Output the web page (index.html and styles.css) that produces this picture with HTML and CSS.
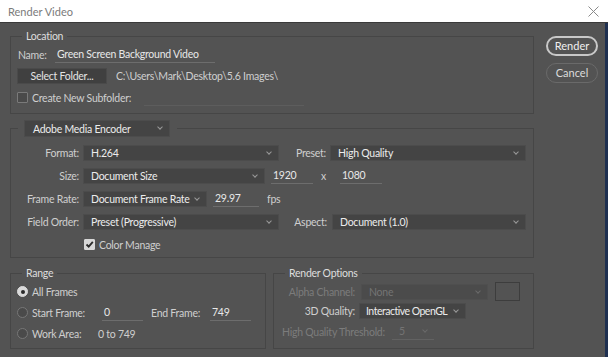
FILE: index.html
```html
<!DOCTYPE html>
<html lang="en">
<head>
    <meta charset="UTF-8">
    <meta name="viewport" content="width=device-width, initial-scale=1.0">
    <title>Render Video</title>
    <link rel="stylesheet" href="styles.css">
</head>
<body>
    <div class="titlebar">
        <span class="title">Render Video</span>
        <svg class="close" width="11" height="11" viewBox="0 0 11 11"><path d="M0.5 0.5L10.5 10.5M10.5 0.5L0.5 10.5" stroke="#8a8a8a" stroke-width="1"/></svg>
    </div>

    <div class="dialog">
        <div class="panels">
            <fieldset class="box location">
                <legend>Location</legend>
                <div class="row">
                    <span class="label name-label">Name:</span>
                    <span class="field name-field">Green Screen Background Video</span>
                </div>
                <div class="row">
                    <span class="btn">Select Folder...</span>
                    <span class="path">C:\Users\Mark\Desktop\5.6 Images\</span>
                </div>
                <div class="row">
                    <span class="check"></span>
                    <span class="label check-label sub-label">Create New Subfolder:</span>
                    <span class="field sub-field"></span>
                </div>
            </fieldset>

            <fieldset class="box encoder">
                <legend><span class="select encoder-select">Adobe Media Encoder<i class="chev"></i></span></legend>
                <div class="row">
                    <span class="label col">Format:</span>
                    <span class="select w195">H.264<i class="chev"></i></span>
                    <span class="label preset-label">Preset:</span>
                    <span class="select w196">High Quality<i class="chev"></i></span>
                </div>
                <div class="row">
                    <span class="label col">Size:</span>
                    <span class="select w181">Document Size<i class="chev"></i></span>
                    <span class="field num">1920</span>
                    <span class="label times">x</span>
                    <span class="field num">1080</span>
                </div>
                <div class="row">
                    <span class="label col">Frame Rate:</span>
                    <span class="select w123">Document Frame Rate<i class="chev"></i></span>
                    <span class="field fps-field">29.97</span>
                    <span class="label fps">fps</span>
                </div>
                <div class="row">
                    <span class="label col">Field Order:</span>
                    <span class="select w195">Preset (Progressive)<i class="chev"></i></span>
                    <span class="label aspect-label">Aspect:</span>
                    <span class="select w194">Document (1.0)<i class="chev"></i></span>
                </div>
                <div class="row color-row">
                    <span class="check checked">
                        <svg width="9" height="9" viewBox="0 0 9 9"><path d="M1.5 4.5L3.7 6.7L7.8 1.8" fill="none" stroke="#2b2b2b" stroke-width="1.8"/></svg>
                    </span>
                    <span class="label check-label">Color Manage</span>
                </div>
            </fieldset>

            <div class="bottom">
                <fieldset class="box range">
                    <legend>Range</legend>
                    <div class="row">
                        <span class="radio on"></span>
                        <span class="label radio-label">All Frames</span>
                    </div>
                    <div class="row">
                        <span class="radio"></span>
                        <span class="label radio-label start-label">Start Frame:</span>
                        <span class="field frame">0</span>
                        <span class="label end-label">End Frame:</span>
                        <span class="field frame">749</span>
                    </div>
                    <div class="row">
                        <span class="radio"></span>
                        <span class="label radio-label work-label">Work Area:</span>
                        <span class="value">0 to 749</span>
                    </div>
                </fieldset>

                <fieldset class="box options">
                    <legend>Render Options</legend>
                    <div class="row">
                        <span class="label dim opt-col">Alpha Channel:</span>
                        <span class="select off w127">None<i class="chev"></i></span>
                        <span class="swatch"></span>
                    </div>
                    <div class="row">
                        <span class="label opt-col quality-label">3D Quality:</span>
                        <span class="select w107">Interactive OpenGL<i class="chev"></i></span>
                    </div>
                    <div class="row">
                        <span class="label dim threshold">High Quality Threshold:</span>
                        <span class="select off flat w42">5<i class="chev"></i></span>
                    </div>
                </fieldset>
            </div>
        </div>

        <div class="actions">
            <span class="pill primary">Render</span>
            <span class="pill">Cancel</span>
        </div>
    </div>
</body>
</html>
```

FILE: styles.css
```css
body {
    margin: 0;
    width: 608px;
    height: 357px;
    overflow: hidden;
    background-color: #535353;
    font-family: Lato, "Noto Sans", sans-serif;
    font-size: 10.5px;
    letter-spacing: -0.25px;
    color: #d6d6d6;
}
.titlebar {
    height: 23px;
    background-color: #fff;
    display: flex;
    align-items: center;
    justify-content: space-between;
    padding: 0 9px 0 8px;
    border-bottom: 1px solid #3a3a3a;
    box-sizing: border-box;
}
.title {
    color: #7b7b7b;
    font-size: 11px;
    letter-spacing: 0;
}
.close {
    margin-top: 1px;
}
.dialog {
    display: flex;
    height: 334px;
    border-right: 3px solid #1f3050;
    box-sizing: border-box;
}
.panels {
    width: 524px;
    flex-shrink: 0;
    margin-left: 10px;
    padding-top: 6px;
}
.box {
    border: 1px solid #464646;
    margin: 0;
    padding: 0 7px;
    min-width: 0;
}
legend {
    padding: 0 4px;
    margin-left: 4px;
    color: #dedede;
    line-height: 15px;
}
.row {
    display: flex;
    align-items: center;
    height: 17px;
}
.row > * {
    flex-shrink: 0;
}
.label {
    color: #cfcfcf;
    white-space: nowrap;
}
.dim {
    color: #7c7c7c;
}
.field {
    height: 15px;
    line-height: 15px;
    border-bottom: 1px solid #6d6d6d;
    color: #e8e8e8;
    padding-left: 2px;
    box-sizing: content-box;
    white-space: nowrap;
}
.select {
    position: relative;
    height: 16px;
    line-height: 15px;
    background-color: #444;
    border: 1px solid #4c4c4c;
    color: #ececec;
    padding-left: 7px;
    box-sizing: border-box;
    white-space: nowrap;
}
.chev {
    position: absolute;
    right: 7px;
    top: 4px;
    width: 3px;
    height: 3px;
    border-right: 1px solid #9a9a9a;
    border-bottom: 1px solid #9a9a9a;
    transform: rotate(45deg);
}
.select.off {
    background-color: #4b4b4b;
    border-color: #4f4f4f;
    color: #747474;
}
.select.off .chev {
    border-color: #6a6a6a;
}
.select.flat {
    background-color: transparent;
    border: none;
    border-bottom: 1px solid #626262;
}

/* location */
.location {
    padding: 0 7px 7px 6px;
}
.location legend {
    margin-left: 5px;
}
.location .row:first-of-type {
    margin-top: 2px;
}
.name-label {
    width: 37px;
    margin-left: 1px;
}
.name-field {
    width: 158px;
}
.btn {
    width: 90px;
    height: 16px;
    line-height: 15px;
    text-align: center;
    background-color: #404040;
    border: 1px solid #4a4a4a;
    color: #e4e4e4;
    box-sizing: border-box;
}
.location .row:nth-of-type(2) {
    margin-top: 4px;
    margin-bottom: 5px;
}
.path {
    margin-left: 9px;
    color: #cfcfcf;
}
.check {
    width: 11px;
    height: 11px;
    border: 1px solid #7a7a7a;
    background-color: #4a4a4a;
    border-radius: 1px;
    box-sizing: border-box;
    display: flex;
    align-items: center;
    justify-content: center;
}
.check.checked {
    background-color: #d8d8d8;
    border-color: #d8d8d8;
}
.check-label {
    margin-left: 4px;
}
.sub-label {
    width: 107px;
    margin-right: 5px;
}
.sub-field {
    width: 158px;
    border-bottom-color: #5d5d5d;
}

/* encoder */
.encoder {
    margin-top: 6px;
    padding-bottom: 4px;
}
.encoder legend {
    margin-left: 0;
    padding: 0 7px 0 6px;
    line-height: normal;
}
.encoder-select {
    display: block;
    width: 146px;
    height: 17px;
    line-height: 16px;
    padding-left: 8px;
}
.encoder .row {
    margin-top: 6px;
}
.encoder .row:first-of-type {
    margin-top: 7px;
}
.col {
    width: 61px;
    text-align: right;
    margin-right: 4px;
}
.w195 { width: 196px; }
.w196 { width: 196px; }
.w194 { width: 194px; }
.w181 { width: 182px; }
.w123 { width: 124px; }
.w127 { width: 127px; }
.w107 { width: 107px; letter-spacing: -0.5px; padding-left: 6px; }
.w42 { width: 42px; }
.preset-label {
    width: 47px;
    text-align: right;
    margin-right: 4px;
}
.aspect-label {
    width: 48px;
    text-align: right;
    margin-right: 5px;
}
.num {
    width: 40px;
    margin-left: 6px;
}
.times {
    margin: 0 8px 0 8px;
}
.fps-field {
    width: 44px;
    margin-left: 6px;
}
.fps {
    margin-left: 8px;
}
.color-row {
    margin-left: 66px;
}
.encoder .color-row {
    margin-top: 6px;
}

/* bottom panels */
.bottom {
    display: flex;
    gap: 7px;
    margin-top: 8px;
}
.range {
    width: 256px;
    box-sizing: border-box;
    padding: 0 7px 6px 6px;
}
.range legend {
    margin-left: 5px;
}
.options {
    flex: 1;
    padding-bottom: 6px;
}
.range .row {
    margin-top: 4px;
}
.range .row:first-of-type {
    margin-top: 2px;
}
.radio {
    width: 11px;
    height: 11px;
    border-radius: 50%;
    border: 1px solid #777;
    background-color: #4a4a4a;
    box-sizing: border-box;
}
.radio.on {
    background-color: #dadada;
    border-color: #dadada;
    display: flex;
    align-items: center;
    justify-content: center;
}
.radio.on::after {
    content: "";
    width: 4px;
    height: 4px;
    border-radius: 50%;
    background-color: #2a2a2a;
}
.radio-label {
    margin-left: 4px;
}
.start-label {
    width: 70px;
}
.work-label {
    width: 66px;
}
.frame {
    width: 39px;
}
.end-label {
    margin-left: 8px;
    width: 59px;
}
.value {
    color: #cfcfcf;
}
.options .row {
    margin-top: 2px;
}
.options .row:first-of-type {
    margin-top: 2px;
}
.options .row:last-child {
    margin-top: 4px;
}
.opt-col {
    width: 74px;
    text-align: right;
    margin-right: 6px;
}
.quality-label {
    margin-right: 4px;
}
.threshold {
    width: 104px;
    margin-left: 1px;
    margin-right: 6px;
}
.swatch {
    width: 25px;
    height: 19px;
    border: 1px solid #3d3d3d;
    margin-left: 7px;
    box-sizing: border-box;
}

/* buttons */
.actions {
    display: flex;
    flex-direction: column;
    gap: 7px;
    margin-left: 12px;
    padding-top: 13px;
}
.pill {
    width: 52px;
    height: 20px;
    line-height: 18px;
    text-align: center;
    border: 1px solid #6a6a6a;
    border-radius: 10px;
    color: #dcdcdc;
    box-sizing: border-box;
    font-size: 11px;
    letter-spacing: 0;
}
.pill.primary {
    border: 2px solid #c8c8c8;
    line-height: 16px;
    color: #f0f0f0;
}
```
